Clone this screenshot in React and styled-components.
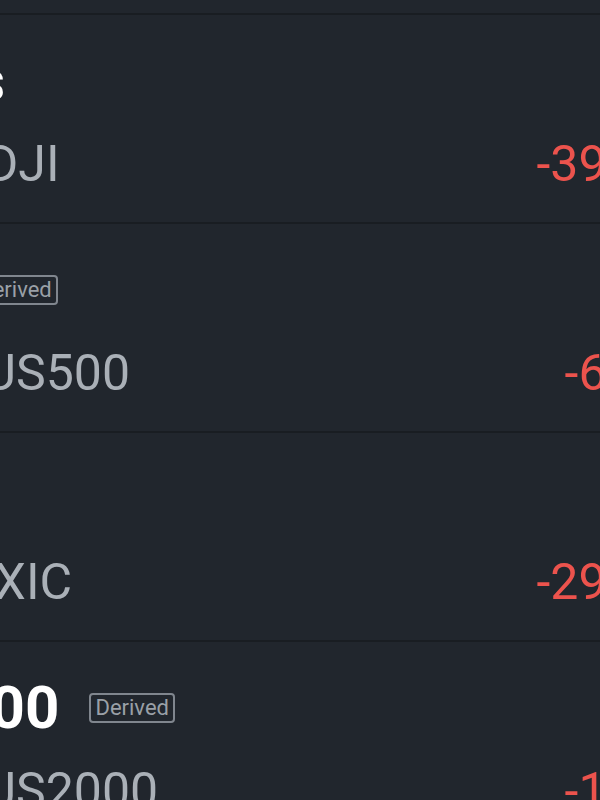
import styled, { createGlobalStyle } from 'styled-components';

const GlobalStyle = createGlobalStyle`
html, body {
  margin: 0;
  padding: 0;
  background-color: #21262d;
}
* {
  box-sizing: border-box;
}
`

const Screen = styled.div`
width: 600px;
height: 800px;
overflow: hidden;
background-color: #21262d;
font-family: Roboto, "Noto Sans", "Liberation Sans", sans-serif;
`

// the phone list is zoomed in, so only its middle strip shows
const List = styled.div`
display: flex;
flex-direction: column;
width: 1067px;
margin-left: -331px;
padding-top: 13px;
`

const Row = styled.div`
display: grid;
grid-template-columns: 1fr auto;
height: 209px;
padding: 30px 32px 0 40px;
border-top: 2px solid #191d22;
`

const Left = styled.div`
display: flex;
flex-direction: column;
min-width: 0;
`

const TitleLine = styled.div`
display: flex;
align-items: center;
gap: 30px;
height: 72px;
`

const Title = styled.span`
font-size: 60px;
line-height: 72px;
font-weight: 700;
color: #ffffff;
white-space: nowrap;
`

const Badge = styled.span`
height: 30px;
padding: 0 4px;
border: 2px solid #80868e;
border-radius: 4px;
font-size: 22px;
line-height: 26px;
color: #9aa0a7;
white-space: nowrap;
`

const SubLine = styled.div`
display: flex;
gap: 16px;
margin-top: 17px;
font-size: 50px;
line-height: 60px;
color: #aab0b7;
white-space: nowrap;
`

const Right = styled.div`
display: flex;
flex-direction: column;
align-items: flex-end;
padding-top: 89px;
`

const Change = styled.span`
font-size: 50px;
line-height: 60px;
color: ${(p) => (p.$down ? '#ec534d' : '#26a69a')};
white-space: nowrap;
`

const indices = [
  { name: 'Dow Jones', market: 'Dow Jones', ticker: '.DJI', change: '-395.87' },
  { name: 'S&P 500', derived: true, market: 'CME Future', ticker: 'US500', change: '-64.12' },
  { name: 'Nasdaq', market: 'Composite', ticker: '.IXIC', change: '-295.43' },
  { name: 'Russell 2000', derived: true, market: 'CME Future', ticker: 'US2000', change: '-15.32' },
];

export default function App() {
  return (
    <>
      <GlobalStyle />
      <Screen>
        <List>
          {indices.map((item) => (
            <Row key={item.ticker}>
              <Left>
                <TitleLine>
                  <Title>{item.name}</Title>
                  {item.derived && <Badge>Derived</Badge>}
                </TitleLine>
                <SubLine>
                  <span>{item.market}</span>
                  <span>{item.ticker}</span>
                </SubLine>
              </Left>
              <Right>
                <Change $down={item.change.startsWith('-')}>{item.change}</Change>
              </Right>
            </Row>
          ))}
        </List>
      </Screen>
    </>
  );
}
